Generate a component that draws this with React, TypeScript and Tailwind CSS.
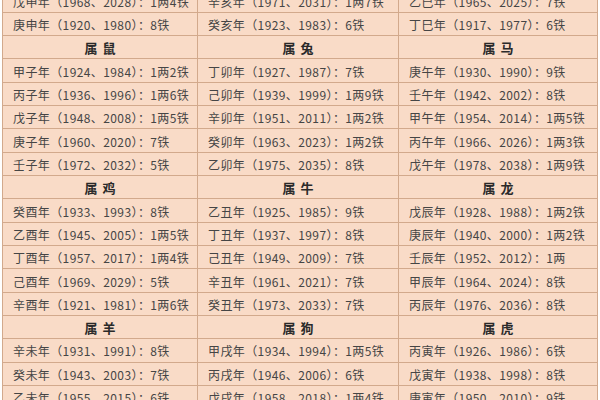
import React from "react";

type Cell = { t: string; h?: boolean };

const col1: Cell[] = [
  { t: "戊申年（1968、2028）：1两4铁" },
  { t: "庚申年（1920、1980）：8铁" },
  { t: "属鼠", h: true },
  { t: "甲子年（1924、1984）：1两2铁" },
  { t: "丙子年（1936、1996）：1两6铁" },
  { t: "戊子年（1948、2008）：1两5铁" },
  { t: "庚子年（1960、2020）：7铁" },
  { t: "壬子年（1972、2032）：5铁" },
  { t: "属鸡", h: true },
  { t: "癸酉年（1933、1993）：8铁" },
  { t: "乙酉年（1945、2005）：1两5铁" },
  { t: "丁酉年（1957、2017）：1两4铁" },
  { t: "己酉年（1969、2029）：5铁" },
  { t: "辛酉年（1921、1981）：1两6铁" },
  { t: "属羊", h: true },
  { t: "辛未年（1931、1991）：8铁" },
  { t: "癸未年（1943、2003）：7铁" },
  { t: "乙未年（1955、2015）：6铁" },
];

const col2: Cell[] = [
  { t: "辛亥年（1971、2031）：1两7铁" },
  { t: "癸亥年（1923、1983）：6铁" },
  { t: "属兔", h: true },
  { t: "丁卯年（1927、1987）：7铁" },
  { t: "己卯年（1939、1999）：1两9铁" },
  { t: "辛卯年（1951、2011）：1两2铁" },
  { t: "癸卯年（1963、2023）：1两2铁" },
  { t: "乙卯年（1975、2035）：8铁" },
  { t: "属牛", h: true },
  { t: "乙丑年（1925、1985）：9铁" },
  { t: "丁丑年（1937、1997）：8铁" },
  { t: "己丑年（1949、2009）：7铁" },
  { t: "辛丑年（1961、2021）：7铁" },
  { t: "癸丑年（1973、2033）：7铁" },
  { t: "属狗", h: true },
  { t: "甲戌年（1934、1994）：1两5铁" },
  { t: "丙戌年（1946、2006）：6铁" },
  { t: "戊戌年（1958、2018）：1两4铁" },
];

const col3: Cell[] = [
  { t: "乙巳年（1965、2025）：7铁" },
  { t: "丁巳年（1917、1977）：6铁" },
  { t: "属马", h: true },
  { t: "庚午年（1930、1990）：9铁" },
  { t: "壬午年（1942、2002）：8铁" },
  { t: "甲午年（1954、2014）：1两5铁" },
  { t: "丙午年（1966、2026）：1两3铁" },
  { t: "戊午年（1978、2038）：1两9铁" },
  { t: "属龙", h: true },
  { t: "戊辰年（1928、1988）：1两2铁" },
  { t: "庚辰年（1940、2000）：1两2铁" },
  { t: "壬辰年（1952、2012）：1两" },
  { t: "甲辰年（1964、2024）：8铁" },
  { t: "丙辰年（1976、2036）：8铁" },
  { t: "属虎", h: true },
  { t: "丙寅年（1926、1986）：6铁" },
  { t: "戊寅年（1938、1998）：8铁" },
  { t: "庚寅年（1950、2010）：9铁" },
];

function CellView({ c }: { c: Cell }) {
  if (c.h) {
    return (
      <div className="bg-[#f9dbc7] flex items-center justify-center gap-[5px] font-bold text-[#2a2a2a] text-[13px]">
        {c.t.split("").map((ch, k) => (
          <span key={k}>{ch}</span>
        ))}
      </div>
    );
  }
  return (
    <div className="bg-[#f9dbc7] flex items-center pl-[10px] pt-[2px] text-[#454545] whitespace-nowrap overflow-hidden tracking-[0.4px]">
      {c.t}
    </div>
  );
}

export default function App() {
  const rows = col1.map((_, i) => [col1[i], col2[i], col3[i]]);
  return (
    <div className="w-[600px] h-[400px] overflow-hidden bg-white">
      <div
        className="ml-[2px] mt-[-11.6px] w-[596px] bg-[#d2a98c] p-px grid grid-cols-[194px_200px_198px] auto-rows-[22.33px] gap-px text-[12px] leading-none"
        style={{ fontFamily: '"Noto Sans CJK SC", "Noto Sans", sans-serif' }}
      >
        {rows.map((r, i) =>
          r.map((c, j) => <CellView key={`${i}-${j}`} c={c} />)
        )}
      </div>
    </div>
  );
}
